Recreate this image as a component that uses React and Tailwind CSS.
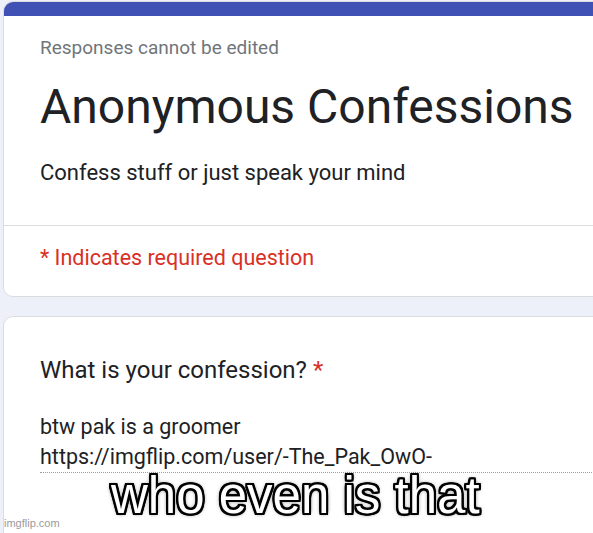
export default function App() {
  const outline = [];
  for (let dx = -2; dx <= 2; dx++) {
    for (let dy = -2; dy <= 2; dy++) {
      if (dx !== 0 || dy !== 0) outline.push(`${dx}px ${dy}px 0 #000`);
    }
  }
  outline.push('0 0 5px #000');
  return (
    <div className="w-[593px] h-[533px] overflow-hidden bg-[#edf0f8] relative" style={{ fontFamily: 'Roboto, "Liberation Sans", sans-serif' }}>
      <div className="pl-[3px] pt-[1px]">
        <div className="-mr-[20px] rounded-[10px] bg-white border border-[#dadce0] overflow-hidden">
          <div className="h-[14px] bg-[#3f51b5]"></div>
          <div className="px-[36px] pt-[20px] pb-[38px]">
            <div className="text-[19px] leading-[24px] text-[#70757a]">Responses cannot be edited</div>
            <div className="mt-[19px] text-[48px] leading-[56px] text-[#202124]">Anonymous Confessions</div>
            <div className="mt-[24px] text-[22px] leading-[28px] text-[#202124]">Confess stuff or just speak your mind</div>
          </div>
          <div className="border-t border-[#dadce0] px-[36px] pt-[18px] pb-[24px]">
            <div className="text-[21.5px] leading-[28px] text-[#d93025]">* Indicates required question</div>
          </div>
        </div>
        <div className="mt-[19px] -mr-[20px] h-[240px] rounded-[10px] bg-white border border-[#dadce0] pl-[36px] pt-[38px]">
          <div className="text-[24px] leading-[30px] text-[#202124]">
            What is your confession? <span className="text-[#d93025]">*</span>
          </div>
          <div className="mt-[27px] text-[21.5px] leading-[30px] text-[#202124]">
            <div>btw pak is a groomer</div>
            <div>https://imgflip.com/user/-The_Pak_OwO-</div>
          </div>
          <div className="border-b border-dotted border-[#9aa0a6]"></div>
        </div>
      </div>
      <div
        className="absolute left-[111px] top-[467px] text-[51px] leading-[58px] text-white whitespace-nowrap"
        style={{ fontFamily: '"Liberation Sans", Arial, sans-serif', textShadow: outline.join(', ') }}
      >
        who even is that
      </div>
      <div className="absolute left-[4px] top-[517px] text-[11px] leading-[13px] text-[#9a9a9a]" style={{ fontFamily: '"Liberation Sans", Arial, sans-serif' }}>imgflip.com</div>
    </div>
  );
}
